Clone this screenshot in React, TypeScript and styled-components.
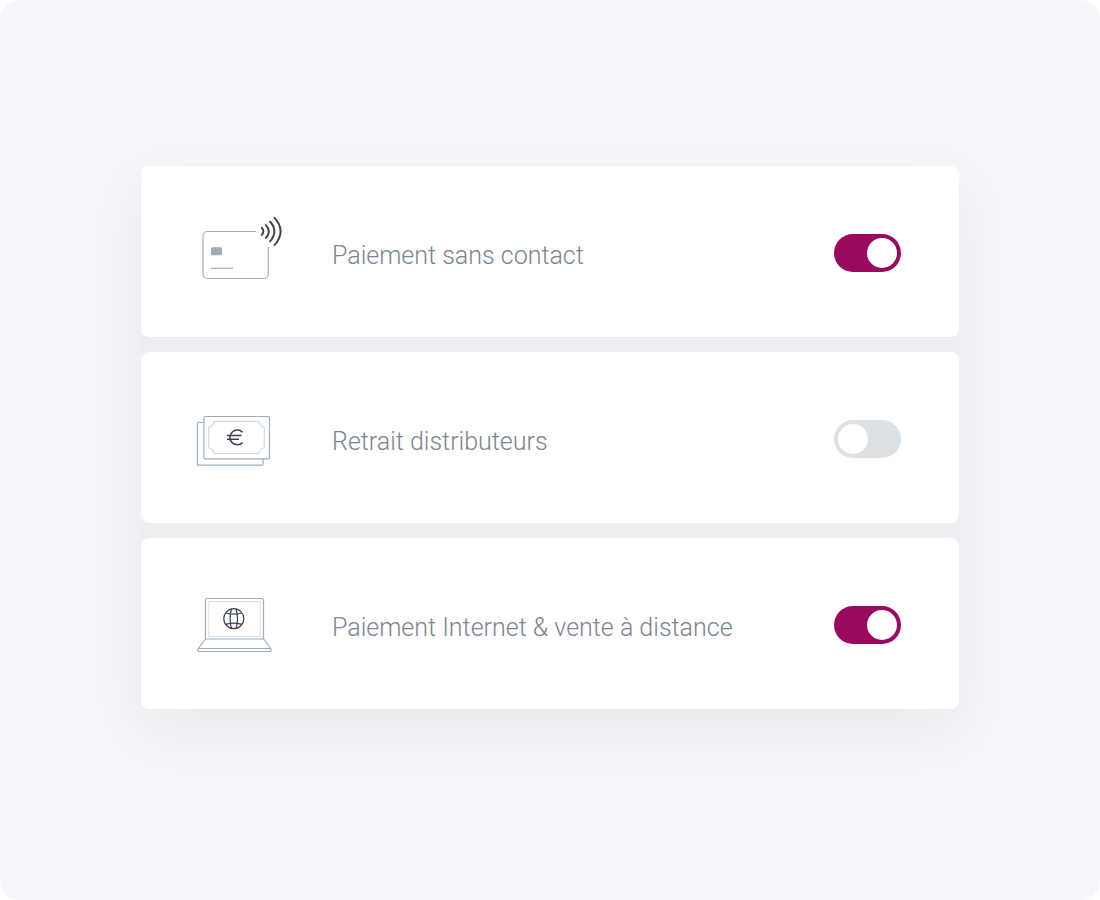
import { useState } from "react";
import type { ReactNode } from "react";
import styled, { createGlobalStyle } from "styled-components";

const GlobalStyle = createGlobalStyle`
  *, *::before, *::after { box-sizing: border-box; }
  body { margin: 0; background: #ffffff; }
`;

const Page = styled.main`
  min-height: 100vh;
  display: flex;
  flex-direction: column;
  justify-content: center;
  padding: 24px 24px 49px;
  border-radius: 20px;
  background: #f4f6fa;
  font-family: Roboto, sans-serif;
`;

const SettingList = styled.ul`
  list-style: none;
  width: 100%;
  max-width: 818px;
  margin: 0 auto;
  padding: 0;
  display: flex;
  flex-direction: column;
  gap: 15px;
  border-radius: 8px;
  background: #edeef2;
  box-shadow: 0 20px 56px rgba(40, 40, 40, 0.06);
`;

const SettingCard = styled.li`
  display: flex;
  align-items: center;
  gap: 46px;
  min-height: 171px;
  padding: 3px 58px 0 55px;
  border-radius: 8px;
  background: #ffffff;
`;

const Icon = styled.svg`
  flex: none;
  width: 90px;
  height: 74px;
  fill: none;
  stroke: #a0adb9;
  stroke-width: 1.2;
  stroke-linejoin: round;
`;

const Label = styled.label`
  flex: 1;
  padding-top: 6px;
  color: #7c8493;
  font-size: 25px;
  font-weight: 300;
  line-height: 32px;
`;

const Switch = styled.input`
  appearance: none;
  flex: none;
  width: 67px;
  height: 38px;
  margin: 0;
  padding: 4px;
  display: flex;
  align-items: center;
  border-radius: 19px;
  background: #dce1e5;
  cursor: pointer;

  &::before {
    content: "";
    width: 30px;
    height: 30px;
    border-radius: 50%;
    background: #ffffff;
  }

  &:checked {
    justify-content: flex-end;
    background: #99095f;
  }
`;

const DARK = "#3c424f";

const ContactlessIcon = () => (
  <Icon viewBox="0 0 90 74" aria-hidden="true">
    <path d="M60 15.5H11.5a4.5 4.5 0 0 0-4.5 4.500v38a4.500 4.500 0 0 0 4.500 4.500h56.300a4.500 4.500 0 0 0 4.500-4.500V31" />
    <rect x="15" y="31.300" width="11" height="8" rx="1.500" fill="#a0adb9" stroke="none" />
    <path d="M15 52.300h22" />
    <g stroke={DARK} strokeWidth="1.900">
      <path d="M65.300 11.300q4.200 4 0 8.200" />
      <path d="M69.300 8.300q7 7.200 0 14.400" />
      <path d="M73.600 5q9.600 10.300 0 20.800" />
      <path d="M78 1.200q13.200 14.300 0 28.500" />
    </g>
  </Icon>
);

const BanknotesIcon = () => (
  <Icon viewBox="0 0 90 74" aria-hidden="true">
    <path d="M8 20.500H3a1.500 1.500 0 0 0-1.500 1.500v40.200a1 1 0 0 0 1 1H66a1 1 0 0 0 1-1V57" />
    <rect x="7.900" y="14.500" width="65.600" height="42.300" rx="1.300" />
    <path
      d="M18 19.400h45q0 4 5.300 6V45.500q-5.300 2-5.300 6H18q0-4-5.300-6V25.400q5.300-2 5.300-6z"
      stroke="#d3dae0"
    />
    <g stroke={DARK} strokeWidth="1.500">
      <path d="M46.600 30.200a7.400 7.400 0 1 0 0 10.400" />
      <path d="M31 33.400h14.500M31 37.300h12" />
    </g>
  </Icon>
);

const LaptopIcon = () => (
  <Icon viewBox="0 0 90 74" aria-hidden="true">
    <path d="M9.500 51V12.500a2 2 0 0 1 2-2h54a2 2 0 0 1 2 2V51" />
    <rect x="12.800" y="13.500" width="51.500" height="35" strokeWidth="1" stroke="#dce1e6" />
    <path d="M9.500 51h58.200L75 61v1.500a1 1 0 0 1-1 1H3a1 1 0 0 1-1-1V61zM2 60.500h73" />
    <g stroke={DARK} strokeWidth="1.200">
      <circle cx="37.800" cy="30.700" r="10" />
      <path d="M35.500 21q-2.800 9.700 0 19.400M40.100 21q2.800 9.700 0 19.400" />
      <path d="M29.800 25q8 2.400 16 0M29.800 36.400q8-2.400 16 0" />
    </g>
  </Icon>
);

interface Setting {
  id: string;
  label: string;
  icon: ReactNode;
  enabled: boolean;
}

const SETTINGS: Setting[] = [
  { id: "contactless", label: "Paiement sans contact", icon: <ContactlessIcon />, enabled: true },
  { id: "withdrawal", label: "Retrait distributeurs", icon: <BanknotesIcon />, enabled: false },
  { id: "online", label: "Paiement Internet & vente à distance", icon: <LaptopIcon />, enabled: true },
];

const SettingRow = ({ id, label, icon, enabled }: Setting) => {
  const [on, setOn] = useState(enabled);
  return (
    <SettingCard>
      {icon}
      <Label htmlFor={id}>{label}</Label>
      <Switch
        id={id}
        type="checkbox"
        role="switch"
        checked={on}
        onChange={(event) => setOn(event.target.checked)}
      />
    </SettingCard>
  );
};

export default function App() {
  return (
    <>
      <GlobalStyle />
      <Page>
        <SettingList>
          {SETTINGS.map((setting) => (
            <SettingRow key={setting.id} {...setting} />
          ))}
        </SettingList>
      </Page>
    </>
  );
}
